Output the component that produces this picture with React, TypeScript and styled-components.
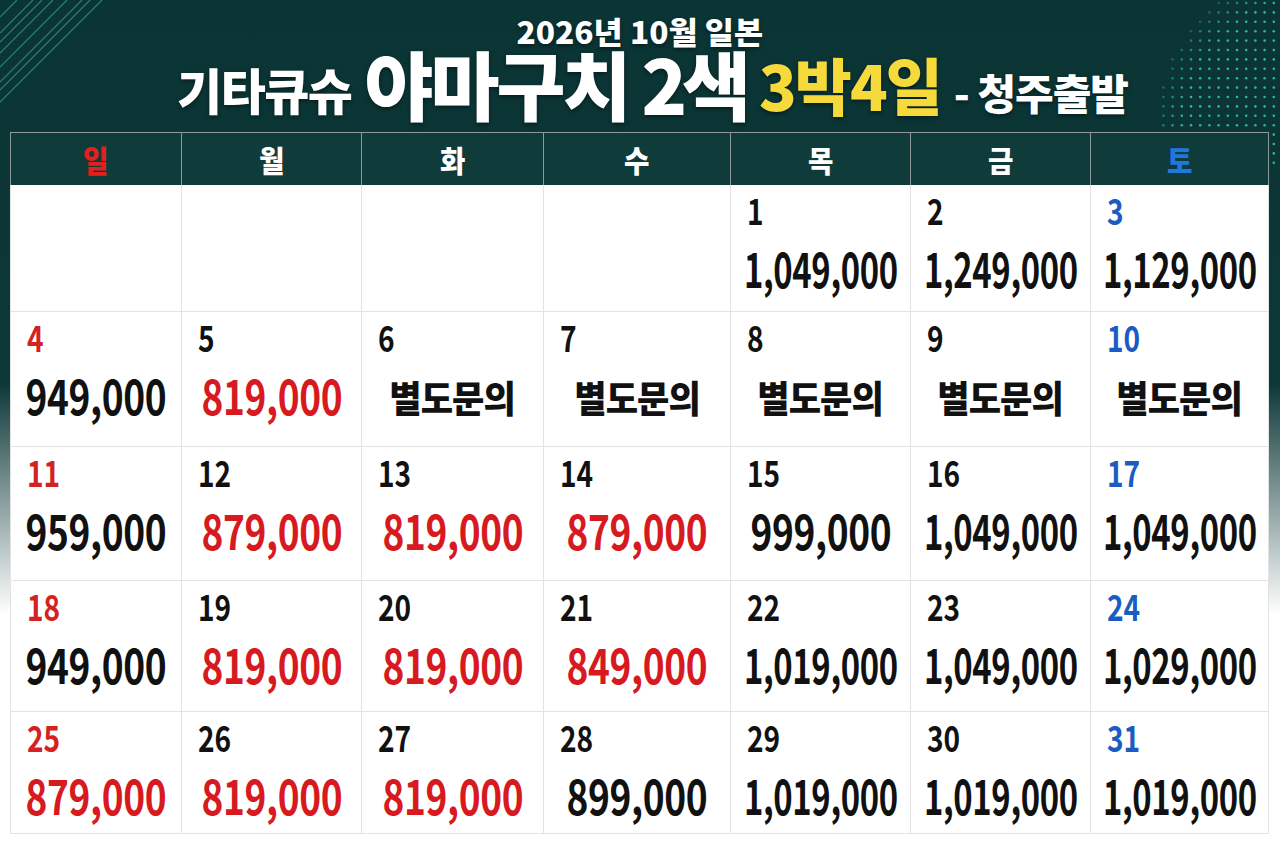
import React from "react";
import styled, { createGlobalStyle } from "styled-components";

const GlobalStyle = createGlobalStyle`
  html, body { margin: 0; padding: 0; background: #ffffff; }
  body { font-family: "Noto Sans CJK KR", "Noto Sans", sans-serif; }
  * { box-sizing: border-box; }
`;

const Page = styled.div`
  position: relative;
  width: 1280px;
  height: 853px;
  overflow: hidden;
  background: linear-gradient(to bottom, #0b3434 0%, #0d3838 45%, #ffffff 72%);
  display: flex;
  flex-direction: column;
  padding: 0 11px 0 10px;
`;

const Deco = styled.svg<{ $left: number; $top: number }>`
  position: absolute;
  left: ${(p) => p.$left}px;
  top: ${(p) => p.$top}px;
  z-index: 0;
  pointer-events: none;
`;

const TitleBlock = styled.header`
  position: relative;
  z-index: 1;
  height: 132px;
  padding-top: 17px;
  display: flex;
  flex-direction: column;
  align-items: center;
  color: #ffffff;
  text-shadow: 0 2px 4px rgba(0, 0, 0, 0.45);
`;

const SubTitle = styled.div`
  font-size: 31px;
  font-weight: 800;
  line-height: 0.9;
  transform: scaleX(1.02);
`;

const MainTitle = styled.h1`
  margin: 6px 0 0 26px;
  display: flex;
  align-items: flex-end;
  gap: 13px;
  line-height: 0.85;
  font-weight: 900;
`;

const TitlePart = styled.span<{ $size: number; $color?: string; $track?: number; $lift?: number }>`
  display: inline-block;
  font-size: ${(p) => p.$size}px;
  color: ${(p) => p.$color || "#ffffff"};
  letter-spacing: ${(p) => p.$track ?? -1}px;
  margin-bottom: ${(p) => p.$lift ?? 0}px;
`;

const Calendar = styled.div`
  position: relative;
  z-index: 1;
  display: grid;
  grid-template-columns: 172px 180px 182px 187px 180px 180px 178px;
  grid-template-rows: 53px 127px 135px 134px 131px 122px;
`;

const HeadCell = styled.div<{ $first?: boolean }>`
  background: #0f3b3b;
  border-top: 1px solid #8c9a9a;
  border-right: 1px solid #8c9a9a;
  border-left: ${(p) => (p.$first ? "1px solid #8c9a9a" : "none")};
  display: flex;
  align-items: center;
  justify-content: center;
`;

const HeadLabel = styled.span<{ $color: string }>`
  display: inline-block;
  font-size: 30px;
  font-weight: 900;
  line-height: 0.9;
  color: ${(p) => p.$color};
  transform: scaleX(0.92);
`;

const Cell = styled.div<{ $first?: boolean }>`
  background: #ffffff;
  border-right: 1px solid #e3e3e3;
  border-bottom: 1px solid #e3e3e3;
  border-left: ${(p) => (p.$first ? "1px solid #e3e3e3" : "none")};
  display: flex;
  flex-direction: column;
  padding-top: 6px;
`;

const DayNum = styled.span<{ $color: string }>`
  display: block;
  margin-left: 16px;
  font-size: 36px;
  font-weight: 700;
  line-height: 1;
  color: ${(p) => p.$color};
  transform: scaleX(0.78);
  transform-origin: left center;
`;

const PriceRow = styled.div`
  margin-top: 15px;
  display: flex;
  justify-content: center;
  white-space: nowrap;
`;

const Price = styled.span<{ $red?: boolean; $squeeze: number }>`
  display: inline-block;
  font-size: 49px;
  font-weight: 700;
  line-height: 1;
  letter-spacing: -0.5px;
  color: ${(p) => (p.$red ? "#d71a1f" : "#111111")};
  transform: scaleX(${(p) => p.$squeeze});
`;

const Memo = styled.span`
  display: inline-block;
  margin-top: 10px;
  font-size: 37px;
  font-weight: 900;
  line-height: 1;
  letter-spacing: -1px;
  color: #111111;
  transform: scaleX(0.95);
`;

type Day = { d: number; price: string; red?: boolean } | null;

const weekdays = [
  { label: "일", color: "#e3201d" },
  { label: "월", color: "#ffffff" },
  { label: "화", color: "#ffffff" },
  { label: "수", color: "#ffffff" },
  { label: "목", color: "#ffffff" },
  { label: "금", color: "#ffffff" },
  { label: "토", color: "#1f78e0" },
];

const M = "별도문의";

const days: Day[] = [
  null, null, null, null,
  { d: 1, price: "1,049,000" }, { d: 2, price: "1,249,000" }, { d: 3, price: "1,129,000" },
  { d: 4, price: "949,000" }, { d: 5, price: "819,000", red: true }, { d: 6, price: M }, { d: 7, price: M },
  { d: 8, price: M }, { d: 9, price: M }, { d: 10, price: M },
  { d: 11, price: "959,000" }, { d: 12, price: "879,000", red: true }, { d: 13, price: "819,000", red: true },
  { d: 14, price: "879,000", red: true }, { d: 15, price: "999,000" }, { d: 16, price: "1,049,000" },
  { d: 17, price: "1,049,000" },
  { d: 18, price: "949,000" }, { d: 19, price: "819,000", red: true }, { d: 20, price: "819,000", red: true },
  { d: 21, price: "849,000", red: true }, { d: 22, price: "1,019,000" }, { d: 23, price: "1,049,000" },
  { d: 24, price: "1,029,000" },
  { d: 25, price: "879,000", red: true }, { d: 26, price: "819,000", red: true }, { d: 27, price: "819,000", red: true },
  { d: 28, price: "899,000" }, { d: 29, price: "1,019,000" }, { d: 30, price: "1,019,000" },
  { d: 31, price: "1,019,000" },
];

const dayColor = (col: number) => (col === 0 ? "#d42222" : col === 6 ? "#1a5cc2" : "#111111");

const lineOffsets = [17, 33, 42, 53, 67, 82, 90, 102];

function DotField() {
  const dots: { x: number; y: number; o: number }[] = [];
  const cx = 1315;
  const cy = 130;
  const r = 160;
  for (let y = 3; y < 172; y += 9.4) {
    for (let x = 1283; x > 1140; x -= 9.2) {
      const dist = Math.hypot(x - cx, y - cy);
      if (dist < r) {
        const edge = (r - dist) / 40;
        dots.push({ x: x - 1130, y, o: Math.min(1, 0.35 + edge) });
      }
    }
  }
  return (
    <Deco $left={1130} $top={0} width={150} height={175} viewBox="0 0 150 175">
      {dots.map((p, i) => (
        <circle key={i} cx={p.x} cy={p.y} r={1.3} fill="#2bb7a2" opacity={p.o} />
      ))}
    </Deco>
  );
}

export default function App() {
  return (
    <Page>
      <GlobalStyle />
      <Deco $left={0} $top={0} width={110} height={110} viewBox="0 0 110 110">
        {lineOffsets.map((k) => (
          <line key={k} x1={0} y1={k} x2={k} y2={0} stroke="#2c948b" strokeWidth={1.2} opacity={0.8} />
        ))}
      </Deco>
      <DotField />
      <TitleBlock>
        <SubTitle>2026년 10월 일본</SubTitle>
        <MainTitle>
          <TitlePart $size={49} $track={-1.5} $lift={5}>기타큐슈</TitlePart>
          <TitlePart $size={75} $track={-3}>야마구치</TitlePart>
          <TitlePart $size={75} $track={-5}>2색</TitlePart>
          <TitlePart $size={62} $track={-2} $lift={4} $color="#f6d93a">3박4일</TitlePart>
          <TitlePart $size={42} $lift={5}>- 청주출발</TitlePart>
        </MainTitle>
      </TitleBlock>
      <Calendar>
        {weekdays.map((w, i) => (
          <HeadCell key={w.label} $first={i === 0}>
            <HeadLabel $color={w.color}>{w.label}</HeadLabel>
          </HeadCell>
        ))}
        {days.map((day, i) => {
          const col = i % 7;
          return (
            <Cell key={i} $first={col === 0}>
              {day && (
                <>
                  <DayNum $color={dayColor(col)}>{day.d}</DayNum>
                  <PriceRow>
                    {day.price === M ? (
                      <Memo>{M}</Memo>
                    ) : (
                      <Price $red={day.red} $squeeze={day.price.length > 7 ? 0.67 : 0.757}>
                        {day.price}
                      </Price>
                    )}
                  </PriceRow>
                </>
              )}
            </Cell>
          );
        })}
      </Calendar>
    </Page>
  );
}
